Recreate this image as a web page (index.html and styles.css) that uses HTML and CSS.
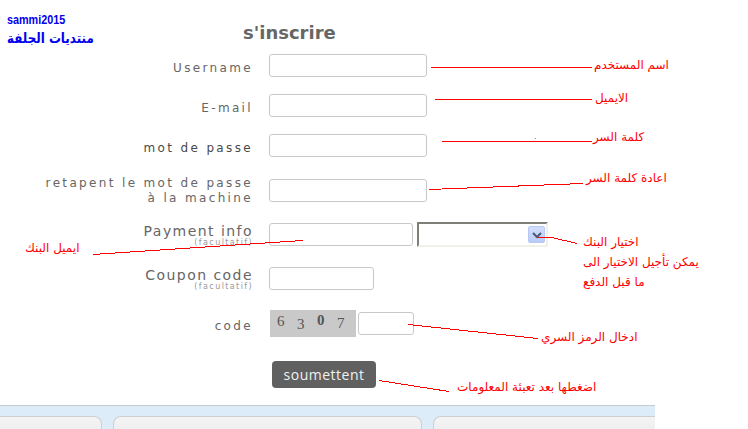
FILE: index.html
```html
<!DOCTYPE html>
<html lang="fr">
<head>
<meta charset="utf-8">
<title>s'inscrire</title>
<link rel="stylesheet" href="styles.css">
</head>
<body>
<div class="page">
  <div class="top">
    <div class="brand">
      <div class="brand-en">sammi2015</div>
      <div class="brand-ar" dir="rtl">منتديات الجلفة</div>
    </div>
    <h1 class="title">s'inscrire</h1>
  </div>

  <form class="form">
    <div class="row r1">
      <label class="lbl">Username</label>
      <input class="inp w-full" type="text">
    </div>
    <div class="row r2">
      <label class="lbl">E-mail</label>
      <input class="inp w-full" type="text">
    </div>
    <div class="row r3">
      <label class="lbl lbl-dark">mot de passe</label>
      <input class="inp w-full" type="password">
    </div>
    <div class="row r4">
      <label class="lbl lbl-two">retapent le mot de passe<br>à la machine</label>
      <input class="inp w-full" type="password">
    </div>
    <div class="row r5">
      <label class="lbl lbl-big"><span class="big">Payment info</span><span class="opt">(facultatif)</span></label>
      <input class="inp w-pay" type="text">
      <div class="select">
        <span class="select-btn">
          <svg width="10" height="8" viewBox="0 0 10 8"><path d="M1 2 L5 6 L9 2" fill="none" stroke="#4a5a78" stroke-width="2"/></svg>
        </span>
      </div>
    </div>
    <div class="row r6">
      <label class="lbl lbl-big"><span class="big">Coupon code</span><span class="opt">(facultatif)</span></label>
      <input class="inp w-coupon" type="text">
    </div>
    <div class="row r7">
      <label class="lbl">code</label>
      <div class="captcha"><span class="d d1">6</span><span class="d d2">3</span><span class="d d3">0</span><span class="d d4">7</span></div>
      <input class="inp w-code" type="text">
    </div>
    <div class="row r8">
      <button class="btn" type="button">soumettent</button>
    </div>
  </form>

  <div class="band">
    <div class="tab t1"></div>
    <div class="tab t2"></div>
    <div class="tab t3"></div>
  </div>

  <svg class="lines" width="748" height="429" viewBox="0 0 748 429">
    <g fill="none" stroke="#ff0000" stroke-width="1" shape-rendering="crispEdges">
      <line x1="431" y1="67.5" x2="592" y2="67.5"/>
      <line x1="435" y1="99.5" x2="592" y2="99.5"/>
      <line x1="442" y1="141.5" x2="592" y2="141.5"/>
      <line x1="429" y1="189.5" x2="583" y2="183.5"/>
      <line x1="93" y1="254.5" x2="303" y2="240.5"/>
      <polyline points="538,237.5 552,237.5 577,243.5"/>
      <line x1="408" y1="324.5" x2="538" y2="338.5"/>
      <line x1="379" y1="380.5" x2="449" y2="391.5"/>
    </g>
    <rect x="535" y="138" width="1" height="1" fill="#ff6060"/>
  </svg>

  <div class="note n1" dir="rtl">اسم المستخدم</div>
  <div class="note n2" dir="rtl">الايميل</div>
  <div class="note n3" dir="rtl">كلمة السر</div>
  <div class="note n4" dir="rtl">اعادة كلمة السر</div>
  <div class="note n5" dir="rtl">ايميل البنك</div>
  <div class="note n6" dir="rtl">اختيار البنك<br>يمكن تأجيل الاختيار الى<br>ما قبل الدفع</div>
  <div class="note n7" dir="rtl">ادخال الرمز السري</div>
  <div class="note n8" dir="rtl">اضغطها بعد تعبئة المعلومات</div>
</div>
</body>
</html>
```
FILE: styles.css
```css
html, body {
  margin: 0;
  padding: 0;
  background: #ffffff;
}
body {
  font-family: "DejaVu Sans", Verdana, sans-serif;
}
.page {
  position: relative;
  width: 748px;
  height: 429px;
  overflow: hidden;
}

/* header */
.top {
  display: flex;
  height: 54px;
}
.brand {
  width: 236px;
  padding: 12px 0 0 7px;
}
.brand-en {
  font-family: "Liberation Sans", sans-serif;
  font-weight: bold;
  font-size: 13px;
  line-height: 15px;
  color: #0000ee;
  transform: scaleX(0.83);
  transform-origin: left center;
}
.brand-ar {
  display: inline-block;
  margin-top: 3px;
  font-family: "DejaVu Sans", sans-serif;
  font-weight: bold;
  font-size: 14px;
  line-height: 17px;
  color: #0000ee;
  transform: scaleX(0.85);
  transform-origin: left center;
}
.title {
  margin: 0;
  padding-top: 22px;
  font-family: "DejaVu Sans", Verdana, sans-serif;
  font-weight: bold;
  font-size: 18px;
  line-height: 22px;
  color: #666666;
}

/* form */
.form {
  margin: 0;
}
.row {
  display: flex;
  align-items: center;
}
.r1 { height: 23px; }
.r2 { height: 23px; margin-top: 17px; }
.r3 { height: 23px; margin-top: 17px; }
.r4 { height: 32px; margin-top: 17px; }
.r5 { height: 25px; margin-top: 16px; }
.r6 { height: 23px; margin-top: 20px; }
.r7 { height: 27px; margin-top: 20px; }
.r8 { height: 27px; margin-top: 24px; padding-left: 272px; }

.lbl {
  width: 253px;
  margin-right: 16px;
  flex: none;
  text-align: right;
  font-size: 12px;
  line-height: 14px;
  letter-spacing: 2.35px;
  color: #666666;
  padding-top: 4px;
}
.lbl-dark {
  color: #4a4a4a;
}
.lbl-two {
  line-height: 15px;
  padding-top: 1px;
}
.lbl-big {
  display: flex;
  flex-direction: column;
  align-items: flex-end;
  padding-top: 0;
}
.big {
  font-size: 14px;
  line-height: 16px;
  letter-spacing: 1.45px;
}
.opt {
  font-size: 8px;
  line-height: 8px;
  letter-spacing: 1.4px;
  color: #9a9a9a;
}

.inp {
  box-sizing: border-box;
  height: 23px;
  margin: 0;
  padding: 0 4px;
  border: 1px solid #c8c8c8;
  border-radius: 3px;
  background: #ffffff;
  flex: none;
}
.w-full { width: 158px; }
.w-pay { width: 144px; }
.w-coupon { width: 105px; }
.w-code { width: 56px; margin-left: 2px; }

.select {
  box-sizing: border-box;
  width: 131px;
  height: 25px;
  margin-left: 4px;
  border-top: 2px solid #7f7f77;
  border-left: 2px solid #7f7f77;
  border-right: 2px solid #f1f1ea;
  border-bottom: 2px solid #f1f1ea;
  background: #ffffff;
  display: flex;
  justify-content: flex-end;
  align-items: center;
  padding-right: 1px;
}
.select-btn {
  box-sizing: border-box;
  width: 17px;
  height: 17px;
  border: 1px solid #b7c8f4;
  border-radius: 2px;
  background: linear-gradient(#d2defc, #b9cbf7);
  display: flex;
  align-items: center;
  justify-content: center;
}

.captcha {
  box-sizing: border-box;
  width: 86px;
  height: 27px;
  margin-left: 1px;
  background: #c9c9c9;
  display: flex;
  align-items: flex-start;
  padding-left: 7px;
  gap: 12px;
  font-family: "Liberation Serif", serif;
  font-size: 15px;
  line-height: 15px;
  color: #555555;
  flex: none;
}
.d { width: 8px; }
.d1 { margin-top: 4px; }
.d2 { margin-top: 7px; }
.d3 { margin-top: 3px; font-weight: bold; }
.d4 { margin-top: 6px; }

.btn {
  box-sizing: border-box;
  width: 104px;
  height: 27px;
  margin: 0;
  padding: 0;
  border: none;
  border-radius: 4px;
  background: #606060;
  color: #f0f0f0;
  font-family: "Open Sans", sans-serif;
  font-size: 14px;
  letter-spacing: 0.5px;
}

/* bottom band */
.band {
  box-sizing: border-box;
  width: 655px;
  height: 24px;
  margin-top: 17px;
  border-top: 1px solid #c3cbd3;
  background: #dcecf8;
  display: flex;
  gap: 11px;
  padding-top: 10px;
  overflow: hidden;
}
.tab {
  box-sizing: border-box;
  height: 20px;
  flex: none;
  background: linear-gradient(#f4f4f4, #ececec);
  border: 1px solid #cfcfcf;
  border-bottom: none;
  border-radius: 8px 8px 0 0;
}
.t1 { width: 112px; margin-left: -10px; }
.t2 { width: 309px; }
.t3 { width: 240px; }

/* annotations */
.lines {
  position: absolute;
  left: 0;
  top: 0;
  pointer-events: none;
}
.note {
  position: absolute;
  font-family: "DejaVu Sans", sans-serif;
  font-size: 12px;
  line-height: 14px;
  color: #ff0000;
  white-space: nowrap;
  text-align: left;
}
.n1 { left: 594px; top: 58px; }
.n2 { left: 595px; top: 91px; }
.n3 { left: 593px; top: 130px; }
.n4 { left: 586px; top: 171px; }
.n5 { left: 25px; top: 241px; }
.n6 { left: 583px; top: 232px; line-height: 20px; }
.n7 { left: 541px; top: 330px; }
.n8 { left: 457px; top: 380px; }
```
